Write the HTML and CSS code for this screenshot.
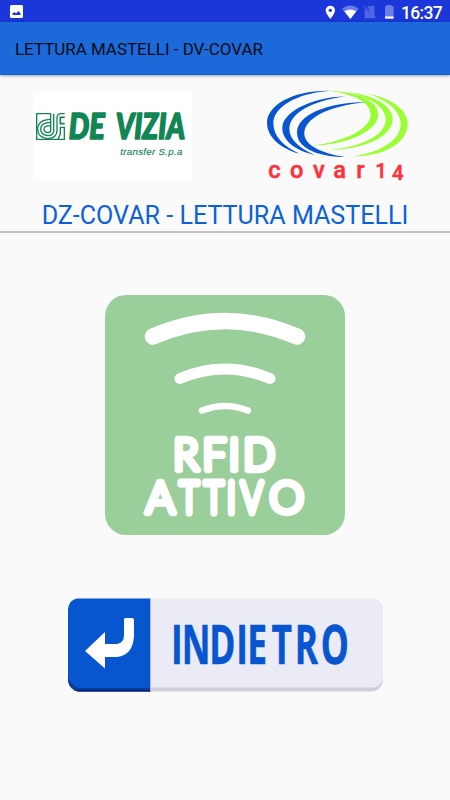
FILE: index.html
```html
<!DOCTYPE html>
<html lang="it">
<head>
<meta charset="utf-8">
<title>Lettura mastelli</title>
<link rel="stylesheet" href="styles.css">
</head>
<body>
<div class="status">
  <svg class="shot" viewBox="0 0 13 13"><rect width="13" height="13" rx="1.5" fill="#fff"/><path d="M2.5 10V8.5L4.5 7l1.5 1.5L8.5 6l2 2.5V10z" fill="#1b36d9"/></svg>
  <svg class="tray" viewBox="0 0 210 54">
    <path d="M16 2a14 14 0 0 0-14 14c0 10 14 26 14 26s14-16 14-26A14 14 0 0 0 16 2z" fill="#fff"/>
    <circle cx="16" cy="16" r="5" fill="#1b36d9"/>
    <path d="M51 11Q76-8 101 11L76 42z" fill="#6b7be8"/>
    <path d="M58 19Q76 8 94 19L76 42z" fill="#fff"/>
    <path d="M126 3h22v37zM119 9l31 31h-31z" fill="#5366e2"/>
    <path d="M117 4l36 36" stroke="#7484e9" stroke-width="2.5"/>
    <path d="M180 4h5V0h15v4h6v30h-26z" fill="#6b7be8"/>
    <path d="M180 34h26v7h-26z" fill="#fff"/>
  </svg>
  <span class="clock">16:37</span>
</div>
<header class="bar">LETTURA MASTELLI - DV-COVAR</header>
<div class="logos">
  <svg class="vizia" viewBox="24 21 477 264">
    <rect x="24" y="21" width="477" height="264" fill="#fff"/>
    <g fill="none" stroke="#118553" stroke-width="4">
      <path d="M78 86H35V163H118V127H106V146Q104 156 98 163"/>
      <path d="M77 86V136Q77 143 69 143Q57 142 57 132Q57 122 77 122"/>
      <path d="M86 86V139Q83 152 68 152Q47 149 47 132Q48 112 77 112"/>
      <path d="M77 103Q39 104 38 132Q38 158 68 161Q96 158 96 137V97Q97 86 108 86H119"/>
      <path d="M119 97H106V116H119" stroke-width="5"/>
    </g>
    <text class="brand" x="131" y="163" textLength="108" lengthAdjust="spacingAndGlyphs">DE</text>
    <text class="brand" x="272" y="163" textLength="208" lengthAdjust="spacingAndGlyphs">VIZIA</text>
    <text class="sub" x="286" y="210" textLength="186">transfer S.p.a</text>
  </svg>
  <svg class="covar" viewBox="0 0 465 300">
    <g fill="#9f3">
      <path d="M205 17C300 20 355 50 355 88C355 135 270 180 155 182C260 170 332 130 332 88C332 55 290 28 205 17Z"/>
      <path d="M265 22C350 32 398 65 398 103C398 155 310 195 207 195C310 185 377 150 377 103C377 70 340 40 265 22Z"/>
      <path d="M325 26C400 42 443 75 443 117C443 175 370 215 275 214C360 205 422 165 422 117C422 80 390 50 325 26Z"/>
    </g>
    <g fill="#0755d1">
      <path d="M210 17C95 15 21 62 21 113C21 155 60 190 118 206C72 185 40 155 40 115C40 68 105 25 210 17Z"/>
      <path d="M258 34C150 38 67 82 67 130C67 165 105 198 165 210C120 190 88 165 88 132C88 88 150 48 258 34Z"/>
      <path d="M318 51C200 52 111 90 111 143C111 185 165 215 255 216C185 205 133 180 133 146C133 100 200 65 318 51Z"/>
    </g>
    <text class="covar-name" x="25 90 159 220 289" y="279">covar<tspan class="digits" x="346 396" y="279 285">14</tspan></text>
  </svg>
</div>
<h1 class="title"><span>DZ-COVAR - LETTURA MASTELLI</span></h1>
<main class="main">
  <svg class="rfid" viewBox="0 0 240 240">
    <rect width="240" height="240" rx="21" fill="#9ace9a"/>
    <g fill="none" stroke="#fff" stroke-linecap="round">
      <path d="M48 41.500Q120 10.500 192 41.500" stroke-width="16.500"/>
      <path d="M75 83.500Q120 64.500 165 83.500" stroke-width="11"/>
      <path d="M97 115.500Q120 106.500 143 115.500" stroke-width="6.500"/>
    </g>
    <text class="rfid-text" transform="scale(.96 1)" x="71 101.500 129 144" y="175.500">RFID</text>
    <text class="rfid-text" x="41" y="218">A</text>
    <text class="rfid-text" transform="scale(.76 1)" x="98 130.500 160.500 179" y="218">TTIV</text>
    <text class="rfid-text" x="164.500" y="218">O</text>
  </svg>
  <svg class="back" viewBox="0 0 315 94">
    <path d="M10 3H305Q315 3 315 13V83Q313 93 303 93.500H10Q1 91 0 83V13Z" fill="#cfcfdb"/>
    <path d="M82 .500H304Q314 1 315 11V80Q313 89 305 89.500H82Z" fill="#ebebf6"/>
    <path d="M0 79H82.500V93.500H10Q1 91 0 83Z" fill="#063f91"/>
    <path d="M5 92H82.500V93.500H10Z" fill="#001a80"/>
    <path d="M9 .500H82.500V90H11Q3 88 0 79V11Q1 2 9 .500Z" fill="#0755cf"/>
    <path d="M82.500 .500V93.500" stroke="#aebce0" stroke-width="1"/>
    <path d="M17 53L37 34V46H49Q56 45 56 37V21Q56 20 58 20H64Q66 20 66 22V38Q65 57 49 59H37V70.500Z" fill="#fff"/>
    <text class="back-text" transform="translate(0 66) scale(.66 1)" x="156 172.500 214 255 271.500 308.500 343.500 383" y="0">INDIETRO</text>
  </svg>
</main>
</body>
</html>
```

FILE: styles.css
```css
body {
  margin: 0;
  height: 800px;
  background: #fafafa;
  font-family: Roboto, sans-serif;
  display: flex;
  flex-direction: column;
  overflow: hidden;
}
svg { display: block; flex: none; }
.status {
  height: 22px;
  flex: none;
  background: #1b36d9;
  display: flex;
  align-items: center;
  box-sizing: border-box;
  padding: 0 8px 0 10px;
}
.shot { width: 13px; height: 13px; }
.tray { width: 70px; height: 18px; margin: 5px 0 0 302px; }
.clock { color: #fff; font-size: 17.5px; line-height: 22px; margin: 3px 0 0 6px; font-weight: 500; letter-spacing: -.7px; white-space: nowrap; }
.bar {
  height: 53px;
  flex: none;
  box-sizing: border-box;
  border-bottom: 1px solid #0861dc;
  background: #1c69d9;
  color: #080b12;
  font-size: 16.95px;
  line-height: 55px;
  padding-left: 15px;
  box-shadow: 0 1px 3px rgba(0,0,0,.35);
}
.logos {
  height: 115px;
  flex: none;
  display: flex;
  align-items: flex-start;
  padding: 10px 35px 0 33px;
  justify-content: space-between;
}
.vizia { width: 159px; height: 88px; margin-top: 7px; }
.covar { width: 155px; height: 100px; }
.brand { font: italic 900 106px Lato, sans-serif; fill: #118553; stroke: #118553; stroke-width: 5; stroke-linejoin: round; }
.sub { font: italic 29px "Liberation Sans", sans-serif; fill: #118553; stroke: #118553; stroke-width: .5; }
.covar-name { font: 500 71px Roboto, sans-serif; fill: #ff3038; stroke: #ff3038; stroke-width: 1.5; }
.digits { font-size: 61px; }
.title {
  margin: 0;
  height: 33px;
  flex: none;
  box-sizing: border-box;
  border-bottom: 2px solid #c2c2c2;
  color: #0b60dc;
  font-size: 25.1px;
  line-height: 31px;
  font-weight: 400;
  text-align: center;
  white-space: nowrap;
}
.main { display: flex; flex-direction: column; align-items: center; padding-top: 62px; gap: 63px; }
.rfid { width: 240px; height: 240px; }
.rfid-text { font: 300 43.5px Lato, sans-serif; fill: #fff; stroke: #fff; stroke-width: 6.3; stroke-linejoin: round; stroke-linecap: round; vector-effect: non-scaling-stroke; }
.back { width: 315px; height: 94px; }
.back-text { font: 700 53.5px "Open Sans", sans-serif; fill: #0755cf; stroke: #0755cf; stroke-width: .6; }
```
